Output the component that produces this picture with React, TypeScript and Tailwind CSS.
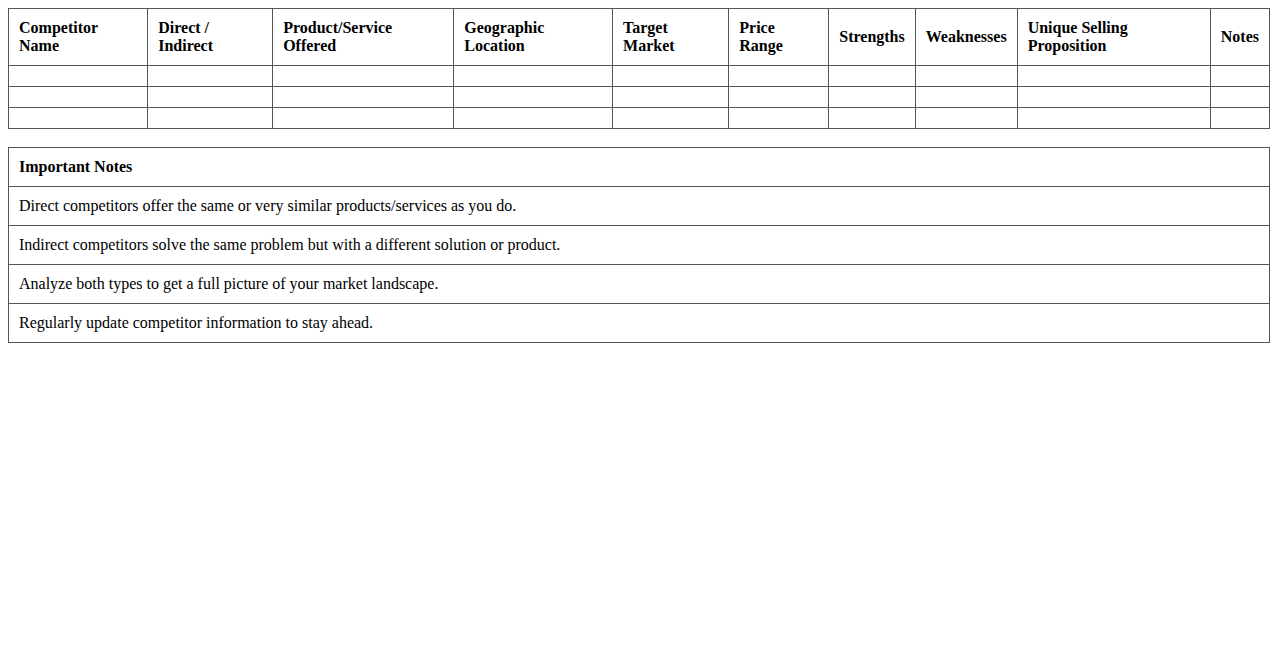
import React from "react";

const headers = [
  "Competitor Name",
  "Direct / Indirect",
  "Product/Service Offered",
  "Geographic Location",
  "Target Market",
  "Price Range",
  "Strengths",
  "Weaknesses",
  "Unique Selling Proposition",
  "Notes",
];

const notes = [
  "Direct competitors offer the same or very similar products/services as you do.",
  "Indirect competitors solve the same problem but with a different solution or product.",
  "Analyze both types to get a full picture of your market landscape.",
  "Regularly update competitor information to stay ahead.",
];

export default function App() {
  return (
    <div
      className="min-h-[650px] bg-white p-2 text-[16px] text-black"
      style={{ fontFamily: '"Liberation Serif", "Times New Roman", serif' }}
    >
      <table className="w-full border-collapse">
        <thead>
          <tr>
            {headers.map((h) => (
              <th
                key={h}
                className="border border-[#555] p-[10px] text-left align-middle font-bold leading-[18px]"
              >
                {h}
              </th>
            ))}
          </tr>
        </thead>
        <tbody>
          {[0, 1, 2].map((r) => (
            <tr key={r}>
              {headers.map((h) => (
                <td key={h} className="border border-[#555] p-[10px] leading-[18px]"></td>
              ))}
            </tr>
          ))}
        </tbody>
      </table>

      <table className="mt-[18px] w-full border-collapse">
        <thead>
          <tr>
            <th className="border border-[#555] p-[10px] text-left font-bold leading-[18px]">
              Important Notes
            </th>
          </tr>
        </thead>
        <tbody>
          {notes.map((n) => (
            <tr key={n}>
              <td className="border border-[#555] p-[10px] leading-[18px]">{n}</td>
            </tr>
          ))}
        </tbody>
      </table>
    </div>
  );
}
